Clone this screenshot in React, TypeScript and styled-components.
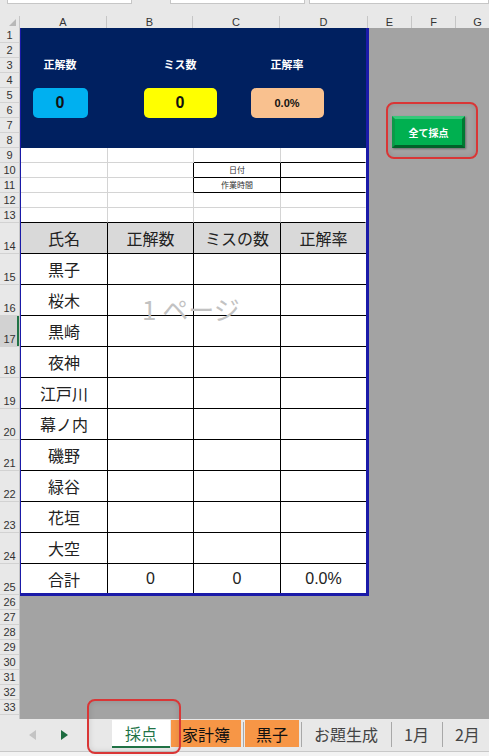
import styled, { createGlobalStyle } from "styled-components";

const GlobalStyle = createGlobalStyle`
  html, body {
    margin: 0;
    padding: 0;
    background: #e8e8e8;
  }
  * {
    box-sizing: border-box;
  }
  #root {
    width: 489px;
    height: 756px;
    overflow: hidden;
  }
`;

const JP = `"Noto Sans CJK JP", "Liberation Sans", sans-serif`;
const SANS = `"Liberation Sans", "Noto Sans CJK JP", sans-serif`;

const GRID = "#d4d4d4";
const INK = "#000";
const NONE = "transparent";

const headerCols: [string, number][] = [
    ["A", 87],
    ["B", 86],
    ["C", 87],
    ["D", 88],
    ["E", 44],
    ["F", 44],
    ["G", 44],
];

// rows 14-25 are the tall score rows
const rowHeights = Array.from({ length: 33 }, (_, i) =>
    i + 1 >= 14 && i + 1 <= 25 ? 31 : 15
);

type Edge = { r: string; b: string; text?: string };

const blankRows: Edge[][] = [
    [{ r: GRID, b: GRID }, { r: GRID, b: GRID }, { r: GRID, b: INK }, { r: NONE, b: INK }],
    [{ r: GRID, b: GRID }, { r: INK, b: GRID }, { r: INK, b: INK, text: "日付" }, { r: NONE, b: INK }],
    [{ r: GRID, b: GRID }, { r: INK, b: GRID }, { r: INK, b: INK, text: "作業時間" }, { r: NONE, b: INK }],
    [{ r: GRID, b: GRID }, { r: GRID, b: GRID }, { r: GRID, b: GRID }, { r: NONE, b: GRID }],
    [{ r: GRID, b: INK }, { r: GRID, b: INK }, { r: GRID, b: INK }, { r: NONE, b: INK }],
];

const names = ["黒子", "桜木", "黒崎", "夜神", "江戸川", "幕ノ内", "磯野", "緑谷", "花垣", "大空"];

const tableRows: string[][] = [
    ["氏名", "正解数", "ミスの数", "正解率"],
    ...names.map((n) => [n, "", "", ""]),
    ["合計", "0", "0", "0.0%"],
];

const tabs = [
    { label: "家計簿", color: "#f79646" },
    { label: "黒子", color: "#f79646" },
    { label: "お題生成" },
    { label: "1月" },
    { label: "2月" },
];

const App = () => {
    return (
        <Window>
            <GlobalStyle />
            <FormulaStrip>
                <FieldBox $w={125} />
                <FieldBox $w={136} style={{ marginLeft: 38 }} />
                <FieldBox $w={180} style={{ marginLeft: 4 }} />
            </FormulaStrip>

            <ColumnHeaderBar>
                <Corner>
                    <svg width="7" height="7" viewBox="0 0 7 7">
                        <polygon points="7,0 7,7 0,7" fill="#b8b8b8" />
                    </svg>
                </Corner>
                {headerCols.map(([label, w]) => (
                    <ColHead key={label} $w={w}>
                        {label}
                    </ColHead>
                ))}
            </ColumnHeaderBar>

            <SheetBody>
                <RowHeaderColumn>
                    {rowHeights.map((h, i) => (
                        <RowHead key={i} $h={h} $active={i + 1 === 17}>
                            {i + 1}
                        </RowHead>
                    ))}
                </RowHeaderColumn>

                <Canvas>
                    <PrintArea>
                        <Dashboard>
                            <DashLabel>正解数</DashLabel>
                            <DashLabel>ミス数</DashLabel>
                            <DashLabel>正解率</DashLabel>
                            <Counter $bg="#00b0f0" $w={55} $size={16}>0</Counter>
                            <Counter $bg="#ffff00" $w={73} $size={16}>0</Counter>
                            <Counter $bg="#f9c18f" $w={73} $size={11}>0.0%</Counter>
                        </Dashboard>

                        {blankRows.map((row, ri) => (
                            <GridRow key={ri} $h={15}>
                                {row.map((c, ci) => (
                                    <BlankCell key={ci} $r={c.r} $b={c.b}>
                                        {c.text}
                                    </BlankCell>
                                ))}
                            </GridRow>
                        ))}

                        {tableRows.map((row, ri) => {
                            const last = ri === tableRows.length - 1;
                            return (
                                <GridRow key={ri} $h={last ? 29 : 31}>
                                    {row.map((text, ci) => (
                                        <TableCell
                                            key={ci}
                                            $head={ri === 0}
                                            $lastCol={ci === 3}
                                            $lastRow={last}
                                            $num={ci > 0 && ri > 0}
                                        >
                                            {text}
                                        </TableCell>
                                    ))}
                                </GridRow>
                            );
                        })}

                        <PageMark>1 ページ</PageMark>
                    </PrintArea>

                    <SideArea>
                        <MarkRing>
                            <ScoreButton>全て採点</ScoreButton>
                        </MarkRing>
                    </SideArea>
                </Canvas>
            </SheetBody>

            <TabBar>
                <NavArrows>
                    <svg width="7" height="10" viewBox="0 0 7 10">
                        <polygon points="7,0 7,10 0,5" fill="#c4c4c4" />
                    </svg>
                    <svg width="7" height="10" viewBox="0 0 7 10">
                        <polygon points="0,0 7,5 0,10" fill="#1d6b3f" />
                    </svg>
                </NavArrows>
                <ActiveTab>採点</ActiveTab>
                {tabs.map((t, i) => (
                    <TabGroup key={t.label}>
                        {i > 0 && <TabSep />}
                        <SheetTab $bg={t.color}>{t.label}</SheetTab>
                    </TabGroup>
                ))}
            </TabBar>
            <StatusStrip />

            <TabMark />
        </Window>
    );
};

export default App;

/* window frame */

const Window = styled.div`
    position: relative;
    width: 489px;
    height: 756px;
    display: flex;
    flex-direction: column;
    overflow: hidden;
    background: #e8e8e8;
`;

const FormulaStrip = styled.div`
    height: 16px;
    display: flex;
    align-items: flex-start;
    padding-left: 7px;
    flex-shrink: 0;
`;

const FieldBox = styled.div<{ $w: number }>`
    width: ${(p) => p.$w}px;
    flex-grow: ${(p) => (p.$w > 150 ? 1 : 0)};
    height: 4px;
    background: #fff;
    border: 1px solid #c6c6c6;
    border-top: none;
`;

const ColumnHeaderBar = styled.div`
    height: 12px;
    display: flex;
    flex-shrink: 0;
    font-family: ${SANS};
    font-size: 11px;
    color: #333;
`;

const Corner = styled.div`
    width: 20px;
    flex-shrink: 0;
    display: flex;
    justify-content: flex-end;
    align-items: flex-end;
    padding: 0 3px 2px 0;
    border-right: 1px solid #c6c6c6;
`;

const ColHead = styled.div<{ $w: number }>`
    width: ${(p) => p.$w}px;
    flex-shrink: 0;
    line-height: 12px;
    text-align: center;
    border-right: 1px solid #c6c6c6;
`;

/* sheet */

const SheetBody = styled.div`
    height: 691px;
    flex-shrink: 0;
    display: flex;
    overflow: hidden;
`;

const RowHeaderColumn = styled.div`
    width: 20px;
    flex-shrink: 0;
    display: flex;
    flex-direction: column;
    background: #e8e8e8;
    border-right: 1px solid #c6c6c6;
`;

const RowHead = styled.div<{ $h: number; $active: boolean }>`
    height: ${(p) => p.$h}px;
    flex-shrink: 0;
    display: flex;
    align-items: flex-end;
    justify-content: center;
    padding-bottom: 1px;
    border-bottom: 1px solid #d2d2d2;
    font-family: ${SANS};
    font-size: 11px;
    line-height: 12px;
    color: #333;
    background: ${(p) => (p.$active ? "#d2d2d2" : "transparent")};
    box-shadow: ${(p) => (p.$active ? "inset -2px 0 0 #217346" : "none")};
`;

const Canvas = styled.div`
    flex: 1;
    display: flex;
    align-items: flex-start;
    background: #a3a3a3;
`;

const PrintArea = styled.div`
    position: relative;
    width: 349px;
    flex-shrink: 0;
    background: #fff;
    border-left: 1px solid #1a1aa8;
    border-right: 3px solid #1a1aa8;
    border-bottom: 3px solid #1a1aa8;
`;

const Dashboard = styled.div`
    height: 120px;
    background: #002060;
    display: grid;
    grid-template-columns: 78px 162px 52px;
    grid-template-rows: 12px 30px;
    row-gap: 18px;
    padding-top: 30px;
    justify-items: center;
    align-content: start;
`;

const DashLabel = styled.div`
    font-family: ${JP};
    font-size: 11px;
    font-weight: 700;
    line-height: 12px;
    color: #fff;
    white-space: nowrap;
`;

const Counter = styled.div<{ $bg: string; $w: number; $size: number }>`
    width: ${(p) => p.$w}px;
    height: 30px;
    border-radius: 5px;
    background: ${(p) => p.$bg};
    display: flex;
    align-items: center;
    justify-content: center;
    font-family: ${SANS};
    font-weight: 700;
    font-size: ${(p) => p.$size}px;
    color: #111;
`;

const GridRow = styled.div<{ $h: number }>`
    display: grid;
    grid-template-columns: 87px 86px 87px 85px;
    height: ${(p) => p.$h}px;
`;

const BlankCell = styled.div<{ $r: string; $b: string }>`
    border-right: 1px solid ${(p) => p.$r};
    border-bottom: 1px solid ${(p) => p.$b};
    display: flex;
    align-items: center;
    justify-content: center;
    font-family: ${JP};
    font-size: 8px;
    line-height: 1;
    color: #333;
`;

const TableCell = styled.div<{
    $head: boolean;
    $lastCol: boolean;
    $lastRow: boolean;
    $num: boolean;
}>`
    display: flex;
    align-items: center;
    justify-content: center;
    background: ${(p) => (p.$head ? "#d9d9d9" : "#fff")};
    border-right: ${(p) => (p.$lastCol ? "none" : "1px solid #000")};
    border-bottom: ${(p) => (p.$lastRow ? "none" : "1px solid #000")};
    font-family: ${(p) => (p.$num ? SANS : JP)};
    font-size: 16px;
    line-height: 1;
    color: #222;
`;

const PageMark = styled.div`
    position: absolute;
    left: 121px;
    top: 268px;
    font-family: ${JP};
    font-size: 26px;
    line-height: 1;
    color: #c2c2c2;
    white-space: nowrap;
    pointer-events: none;
`;

const SideArea = styled.div`
    padding: 74px 0 0 17px;
`;

const MarkRing = styled.div`
    width: 92px;
    height: 57px;
    padding: 12px 0 0 4px;
    border: 2px solid #d93636;
    border-radius: 8px;
    box-shadow: inset 0 0 6px rgba(0, 0, 0, 0.12);
`;

const ScoreButton = styled.div`
    width: 73px;
    height: 32px;
    display: flex;
    align-items: center;
    justify-content: center;
    background: #00b050;
    border: 3px solid;
    border-color: #35c97a #007a33 #006229 #0a9a48;
    font-family: ${JP};
    font-size: 10px;
    font-weight: 700;
    color: #fff;
    box-shadow: 1px 1px 2px rgba(0, 0, 0, 0.35);
`;

/* sheet tabs */

const TabBar = styled.div`
    height: 33px;
    flex-shrink: 0;
    display: flex;
    align-items: flex-start;
    border-bottom: 1px solid #c8c8c8;
    background: #e8e8e8;
    font-family: ${JP};
    font-size: 16px;
`;

const NavArrows = styled.div`
    width: 112px;
    height: 32px;
    display: flex;
    align-items: center;
    gap: 25px;
    padding-left: 29px;
    flex-shrink: 0;
`;

const ActiveTab = styled.div`
    height: 28px;
    margin-top: 1px;
    padding: 0 13px;
    display: flex;
    align-items: center;
    background: #fff;
    color: #217346;
    border-bottom: 2px solid #217346;
    flex-shrink: 0;
`;

const TabGroup = styled.div`
    display: flex;
    align-items: flex-start;
    flex-shrink: 0;
    margin-left: 1px;
`;

const TabSep = styled.div`
    width: 1px;
    height: 25px;
    margin: 3px 1px 0 1px;
    background: #a8a8a8;
`;

const SheetTab = styled.div<{ $bg?: string }>`
    height: 27px;
    margin-top: 1px;
    padding: 0 11px;
    display: flex;
    align-items: center;
    background: ${(p) => p.$bg || "transparent"};
    color: ${(p) => (p.$bg ? "#111" : "#444")};
`;

const StatusStrip = styled.div`
    flex: 1;
    background: #f3f3f3;
`;

const TabMark = styled.div`
    position: absolute;
    left: 87px;
    top: 699px;
    width: 94px;
    height: 55px;
    border: 2px solid #d93636;
    border-radius: 8px;
    box-shadow: inset 0 0 6px rgba(0, 0, 0, 0.12);
    pointer-events: none;
`;
